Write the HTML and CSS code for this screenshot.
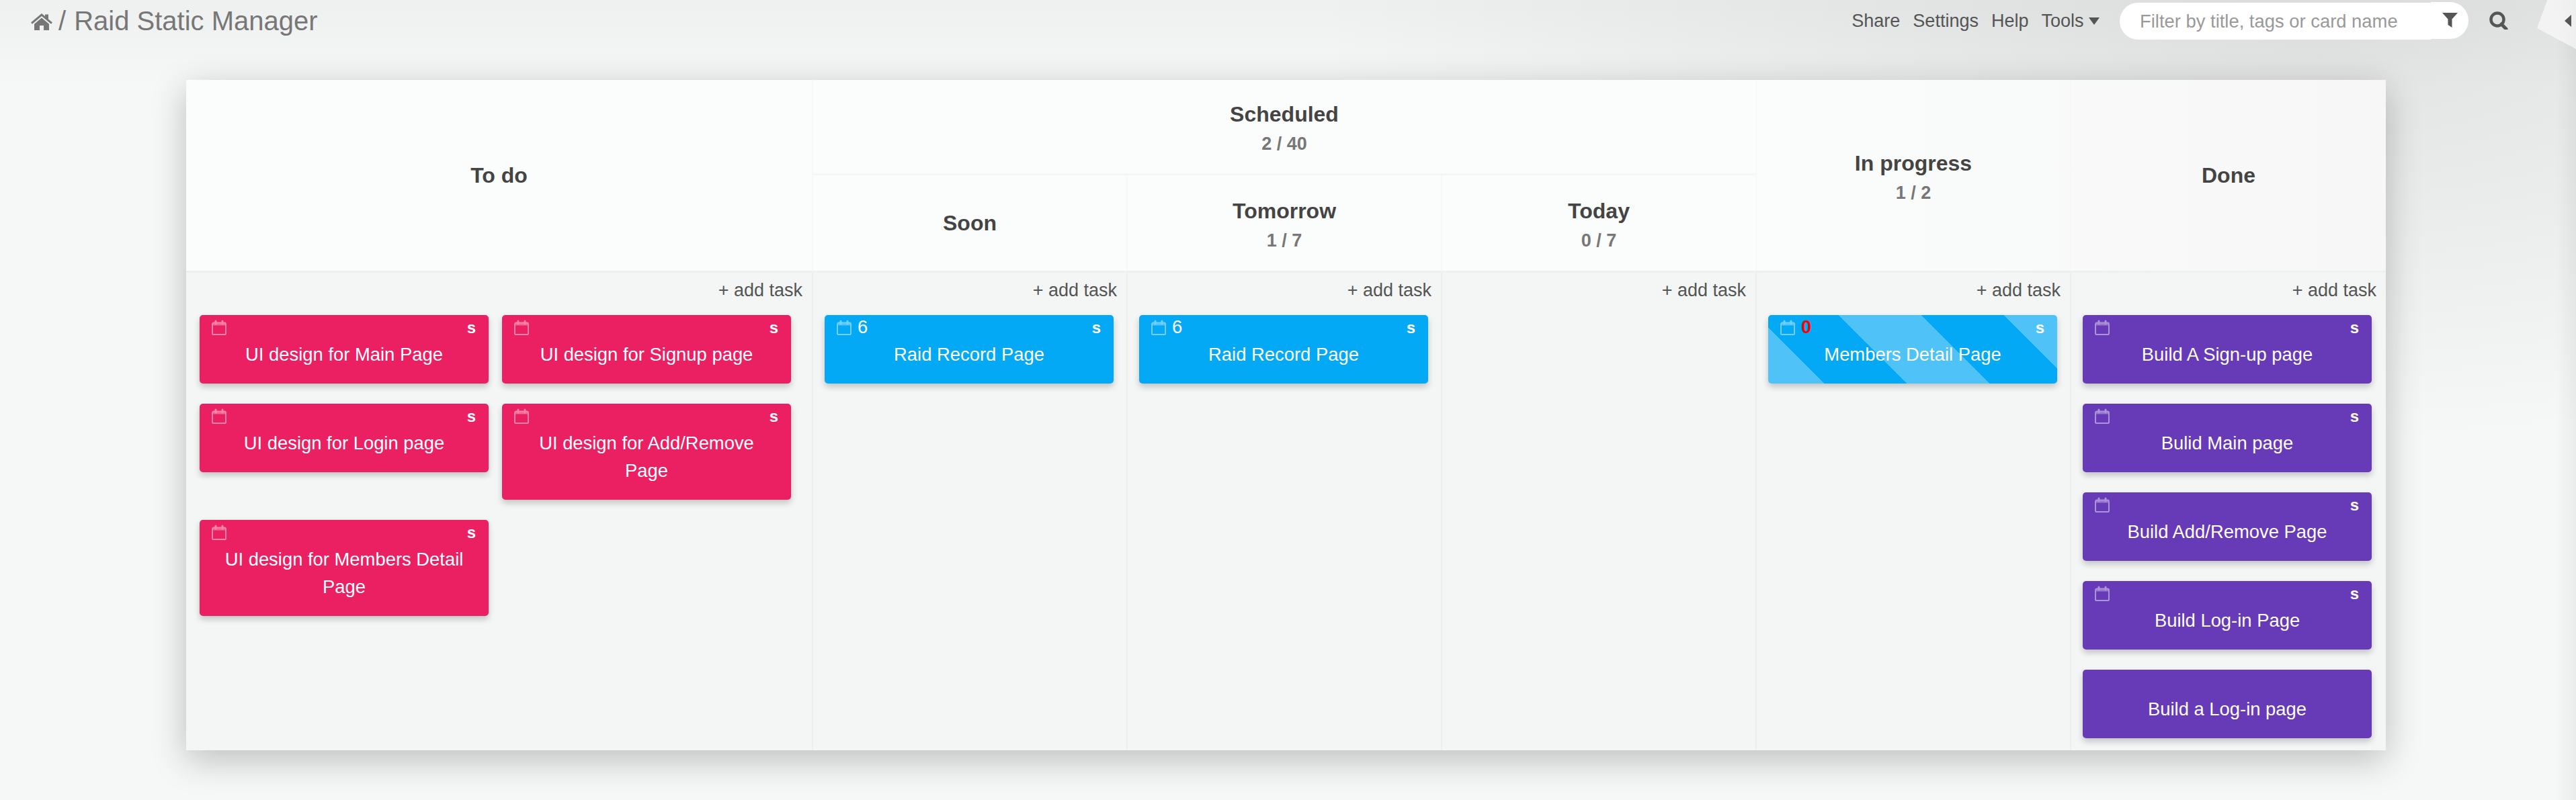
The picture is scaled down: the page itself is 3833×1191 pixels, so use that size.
FILE: index.html
```html
<!DOCTYPE html>
<html lang="en">
<head>
    <meta charset="UTF-8">
    <title>Raid Static Manager</title>
    <link rel="stylesheet" href="styles.css">
</head>
<body>
    <svg class="defs" width="0" height="0">
        <symbol id="cal" viewBox="0 0 22 23">
            <path d="M1 6.500a2 2 0 0 1 2-2h16a2 2 0 0 1 2 2v14.500a1 1 0 0 1-1 1H2a1 1 0 0 1-1-1z" fill="none" stroke="currentColor" stroke-width="2"/>
            <path d="M1 5h20v3.500H1z" fill="currentColor" opacity="0.7"/>
            <path d="M6 6V2 M16 6V2" stroke="currentColor" stroke-width="3" stroke-linecap="round"/>
        </symbol>
    </svg>

    <!-- top bar -->
    <header class="topbar">
        <div class="crumb">
            <svg class="home-icon" viewBox="0 0 32 25"><path d="M16 0l5 4.200V1.500h5v7l6 5-2 2.300L16 4 2 15.800 0 13.500z M16 6.500L5 15.700V25h8v-7h6v7h8v-9.300z" fill="currentColor"/></svg>
            <span class="slash">/</span>
            <span class="board-name">Raid Static Manager</span>
        </div>
        <nav class="nav">
            <a>Share</a>
            <a>Settings</a>
            <a>Help</a>
            <a class="tools">Tools <i class="caret"></i></a>
        </nav>
        <div class="filter">
            <span class="filter-input">Filter by title, tags or card name</span>
            <span class="filter-btn">
                <svg viewBox="0 0 23 22" width="23" height="22"><path d="M0 0h23L14.500 9.500V22L8.500 18V9.500z" fill="currentColor"/></svg>
            </span>
        </div>
        <svg class="search-icon" viewBox="0 0 28 27"><circle cx="12" cy="12" r="9.500" fill="none" stroke="currentColor" stroke-width="4.500"/><path d="M18 19l7 7" stroke="currentColor" stroke-width="5" stroke-linecap="round"/></svg>
        <i class="side-caret"></i>
    </header>

    <main class="board">
        <div class="board-head">
            <div class="lane-title todo-head"><b>To do</b></div>
            <div class="lane-title sched-head"><b>Scheduled</b><small>2 / 40</small></div>
            <div class="lane-title prog-head"><b>In progress</b><small>1 / 2</small></div>
            <div class="lane-title done-head"><b>Done</b></div>
            <div class="lane-title sub"><b>Soon</b></div>
            <div class="lane-title sub"><b>Tomorrow</b><small>1 / 7</small></div>
            <div class="lane-title sub"><b>Today</b><small>0 / 7</small></div>
        </div>

        <div class="board-body">
            <section class="lane lane-todo">
                <div class="add-task">+ add task</div>
                <div class="cards two-col">
                    <div class="card pink">
                        <div class="meta"><svg class="cal"><use href="#cal"/></svg><span class="size">s</span></div>
                        <div class="card-title">UI design for Main Page</div>
                    </div>
                    <div class="card pink">
                        <div class="meta"><svg class="cal"><use href="#cal"/></svg><span class="size">s</span></div>
                        <div class="card-title">UI design for Signup page</div>
                    </div>
                    <div class="card pink">
                        <div class="meta"><svg class="cal"><use href="#cal"/></svg><span class="size">s</span></div>
                        <div class="card-title">UI design for Login page</div>
                    </div>
                    <div class="card pink">
                        <div class="meta"><svg class="cal"><use href="#cal"/></svg><span class="size">s</span></div>
                        <div class="card-title">UI design for Add/Remove Page</div>
                    </div>
                    <div class="card pink">
                        <div class="meta"><svg class="cal"><use href="#cal"/></svg><span class="size">s</span></div>
                        <div class="card-title">UI design for Members Detail Page</div>
                    </div>
                </div>
            </section>

            <section class="lane">
                <div class="add-task">+ add task</div>
                <div class="cards">
                    <div class="card blue">
                        <div class="meta"><svg class="cal"><use href="#cal"/></svg><span class="days">6</span><span class="size">s</span></div>
                        <div class="card-title">Raid Record Page</div>
                    </div>
                </div>
            </section>

            <section class="lane">
                <div class="add-task">+ add task</div>
                <div class="cards">
                    <div class="card blue">
                        <div class="meta"><svg class="cal"><use href="#cal"/></svg><span class="days">6</span><span class="size">s</span></div>
                        <div class="card-title">Raid Record Page</div>
                    </div>
                </div>
            </section>

            <section class="lane">
                <div class="add-task">+ add task</div>
            </section>

            <section class="lane">
                <div class="add-task">+ add task</div>
                <div class="cards">
                    <div class="card blue striped">
                        <div class="meta"><svg class="cal"><use href="#cal"/></svg><span class="days overdue">0</span><span class="size">s</span></div>
                        <div class="card-title">Members Detail Page</div>
                    </div>
                </div>
            </section>

            <section class="lane">
                <div class="add-task">+ add task</div>
                <div class="cards">
                    <div class="card purple">
                        <div class="meta"><svg class="cal"><use href="#cal"/></svg><span class="size">s</span></div>
                        <div class="card-title">Build A Sign-up page</div>
                    </div>
                    <div class="card purple">
                        <div class="meta"><svg class="cal"><use href="#cal"/></svg><span class="size">s</span></div>
                        <div class="card-title">Bulid Main page</div>
                    </div>
                    <div class="card purple">
                        <div class="meta"><svg class="cal"><use href="#cal"/></svg><span class="size">s</span></div>
                        <div class="card-title">Build Add/Remove Page</div>
                    </div>
                    <div class="card purple">
                        <div class="meta"><svg class="cal"><use href="#cal"/></svg><span class="size">s</span></div>
                        <div class="card-title">Build Log-in Page</div>
                    </div>
                    <div class="card purple">
                        <div class="meta"></div>
                        <div class="card-title">Build a Log-in page</div>
                    </div>
                </div>
            </section>
        </div>
    </main>
</body>
</html>
```

FILE: styles.css
```css
/* base */
html, body {
    height: 100%;
}

body {
    margin: 0;
    overflow: hidden;
    font-family: "Liberation Sans", Arial, sans-serif;
    font-size: 27.4px;
    color: #555;
    background-color: #f6f7f7;
    background-image:
        conic-gradient(from 20deg at 3775px 42px, rgba(255, 255, 255, 0.6) 0 98deg, transparent 0),
        linear-gradient(270deg, rgba(0, 0, 0, 0.05) 0, transparent 30px),
        radial-gradient(1500px 620px at 3450px 40px, rgba(0, 0, 0, 0.085), transparent),
        linear-gradient(180deg, rgba(0, 0, 0, 0.03) 0, transparent 130px);
}

.defs {
    position: absolute;
}

/* top bar */
.topbar {
    display: flex;
    align-items: center;
    height: 62px;
    padding: 0 7px 0 46px;
}

.crumb {
    display: flex;
    align-items: center;
    flex: 1;
    color: #777;
    font-size: 40px;
}

.home-icon {
    width: 32px;
    height: 25px;
    margin-top: 2px;
}

.slash {
    margin: 0 12px 0 9px;
}

.nav {
    display: flex;
    gap: 19px;
    margin-right: 30px;
    font-size: 27px;
}

.caret {
    display: inline-block;
    border-top: 11px solid #555;
    border-left: 8px solid transparent;
    border-right: 8px solid transparent;
    vertical-align: 3px;
}

.filter {
    display: flex;
    align-items: center;
    width: 519px;
}

.filter-input {
    width: 433px;
    height: 55px;
    line-height: 55px;
    padding-left: 30px;
    color: #999;
    background: #fff;
    border-radius: 28px 0 0 28px;
}

.filter-btn {
    display: flex;
    align-items: center;
    justify-content: center;
    width: 56px;
    height: 55px;
    margin-top: -2px;
    color: #555;
    background: #fff;
    border-radius: 0 28px 28px 0;
}

.search-icon {
    width: 28px;
    height: 27px;
    margin: 0 0 2px 31px;
    color: #555;
}

.side-caret {
    display: inline-block;
    margin-left: 84px;
    border-right: 10px solid #555;
    border-top: 9px solid transparent;
    border-bottom: 9px solid transparent;
}

/* board */
.board {
    margin: 57px 0 0 277px;
    width: 3273px;
    height: 998px;
    display: flex;
    flex-direction: column;
    box-shadow: 0 14px 50px rgba(0, 0, 0, 0.24);
}

.board-head {
    display: grid;
    grid-template-columns: 931px repeat(4, 468px) 1fr;
    grid-template-rows: 142px 142px;
    background: linear-gradient(90deg, #fbfcfc 70%, #f7f7f7);
    border-bottom: 3px solid #efefef;
}

.lane-title {
    display: flex;
    flex-direction: column;
    align-items: center;
    justify-content: center;
    gap: 10px;
    color: #444;
}

.lane-title b {
    font-size: 32px;
}

.lane-title small {
    margin-bottom: -5px;
    font-size: 27px;
    font-weight: bold;
    color: #777;
}

.todo-head, .prog-head, .done-head {
    grid-row: 1 / 3;
}

.sched-head {
    grid-column: 2 / 5;
    border-bottom: 3px solid #f6f6f6;
    border-left: 2px solid #f8f8f8;
}

.todo-head {
    grid-column: 1;
}

.prog-head {
    grid-column: 5;
    border-left: 2px solid #f8f8f8;
}

.done-head {
    grid-column: 6;
    border-left: 2px solid #f8f8f8;
}

.sub {
    grid-row: 2;
    border-left: 2px solid #f8f8f8;
}

.board-body {
    flex: 1;
    display: grid;
    grid-template-columns: 931px repeat(4, 468px) 1fr;
    background: #f4f5f5;
}

.lane {
    border-left: 2px solid #eeeeee;
    padding-left: 17px;
}

.lane-todo {
    border-left: 0;
    padding-left: 20px;
}

.add-task {
    height: 63px;
    line-height: 53px;
    margin-right: 14px;
    text-align: right;
    font-size: 27px;
}

/* cards */
.cards {
    display: grid;
    grid-template-columns: 430px;
    gap: 30px 20px;
    align-items: start;
}

.two-col {
    grid-template-columns: 430px 430px;
}

.card {
    min-height: 102px;
    padding-bottom: 23px;
    box-sizing: border-box;
    border-radius: 5px;
    color: #fff;
    text-align: center;
    box-shadow: 0 5px 10px rgba(0, 0, 0, 0.2);
}

.pink {
    background-color: #eb2063;
}

.blue {
    background-color: #03a9f4;
}

.purple {
    background-color: #673ab7;
}

.striped {
    background-image: repeating-linear-gradient(45deg, #4fc3f7 -28px, #4fc3f7 59px, #03a9f4 59px, #03a9f4 146px);
}

.meta {
    display: flex;
    align-items: flex-start;
    height: 38px;
    padding: 7px 19px 0 18px;
    box-sizing: border-box;
}

.cal {
    width: 22px;
    height: 23px;
    opacity: 0.45;
}

.days {
    margin: -4px 0 0 9px;
    line-height: 30px;
}

.overdue {
    color: #f00;
    font-weight: bold;
}

.size {
    margin-left: auto;
    font-size: 24px;
    font-weight: bold;
    line-height: 24px;
}

.card-title {
    padding: 0 20px;
    line-height: 41px;
}
```
